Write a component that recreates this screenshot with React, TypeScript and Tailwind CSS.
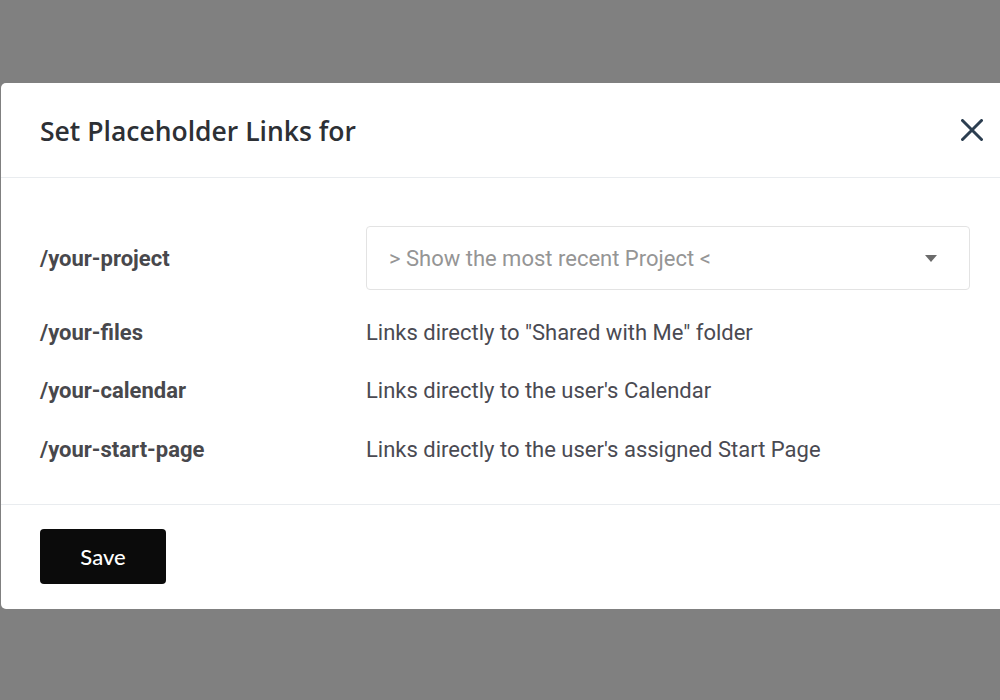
const rows = [
  { path: "/your-files", text: 'Links directly to "Shared with Me" folder' },
  { path: "/your-calendar", text: "Links directly to the user's Calendar" },
  { path: "/your-start-page", text: "Links directly to the user's assigned Start Page" },
];

export default function App() {
  return (
    <div className="h-[700px] overflow-hidden bg-[#808080] pt-[83px]">
      <div className="ml-px h-[526px] w-[999px] overflow-hidden rounded-l-[5px] bg-white">
        {/* Header */}
        <div className="flex h-[95px] items-center justify-between border-b border-[#e9ecef] pl-[39px] pr-4">
          <h2 className="mt-[3px] text-[26.5px] font-semibold text-[#2d3035] [font-family:'Open_Sans',Lato,sans-serif]">
            Set Placeholder Links for
          </h2>
          <button className="flex h-6 w-6 items-center justify-center">
            <svg width="22" height="22" viewBox="0 0 22 22">
              <path d="M1.5 1.5l19 19M20.5 1.5l-19 19" stroke="#2c3e50" strokeWidth="3" strokeLinecap="round" />
            </svg>
          </button>
        </div>

        {/* Body */}
        <div className="h-[327px] border-b border-[#e9ecef] pl-[39px] pr-[30px] pt-[48px] [font-family:Roboto,sans-serif]">
          <div className="grid h-16 grid-cols-[326px_1fr] items-center">
            <span className="text-[22px] font-bold text-[#48484c]">/your-project</span>
            <div className="flex h-16 items-center justify-between rounded-[4px] border border-[#e3e3e3] pl-[22px] pr-[32px] text-[22px] text-[#959595]">
              <span>&gt; Show the most recent Project &lt;</span>
              <svg width="12" height="7" viewBox="0 0 12 7">
                <path d="M0 0h12L6 7z" fill="#6b6b6b" />
              </svg>
            </div>
          </div>
          <div className="mt-[13px]">
            {rows.map((r) => (
              <div key={r.path} className="grid h-[58.5px] grid-cols-[326px_1fr] items-center">
                <span className="text-[22px] font-bold text-[#48484c]">{r.path}</span>
                <span className="text-[22px] text-[#4a4a52]">{r.text}</span>
              </div>
            ))}
          </div>
        </div>

        {/* Footer */}
        <div className="pl-[39px] pt-6">
          <button className="h-[55px] w-[126px] rounded-[4px] bg-[#0b0b0b] text-[22px] font-medium text-white [font-family:Lato,sans-serif]">
            Save
          </button>
        </div>
      </div>
    </div>
  );
}
